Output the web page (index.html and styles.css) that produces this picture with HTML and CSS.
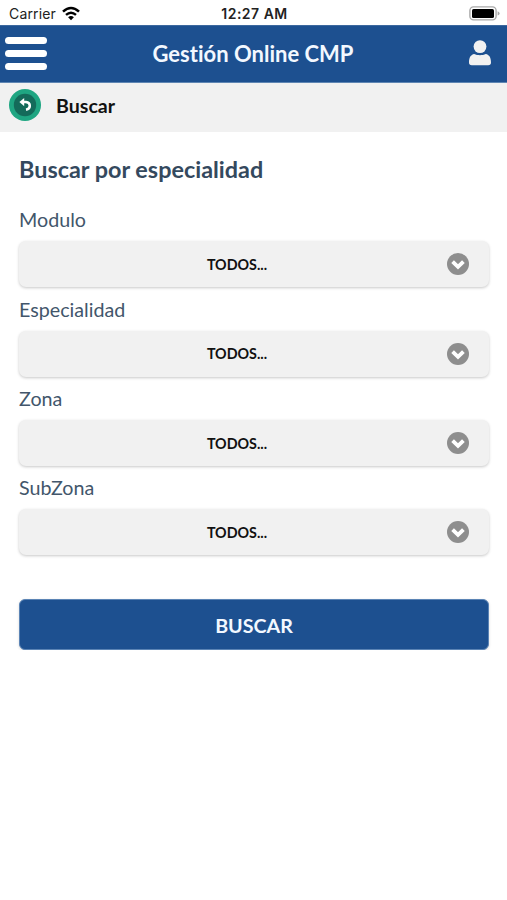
FILE: index.html
```
<!DOCTYPE html>
<html lang="es">
<head>
    <meta charset="UTF-8">
    <meta name="viewport" content="width=device-width, initial-scale=1.0">
    <title>Gestión Online CMP</title>
    <link rel="stylesheet" href="styles.css">
</head>
<body>
    <div class="status-bar">
        <div class="status-left">
            <span class="carrier">Carrier</span>
            <svg class="wifi" width="20" height="15" viewBox="0 0 20 15">
                <path d="M2 5.6 Q10 -1.6 18 5.6" fill="none" stroke="#000" stroke-width="2.6"/>
                <path d="M5 8.9 Q10 4.4 15 8.9" fill="none" stroke="#000" stroke-width="2.4"/>
                <path d="M7.1 11.2 Q10 8.6 12.9 11.2 L10 14.2 Z" fill="#000"/>
            </svg>
        </div>
        <span class="clock">12:27 AM</span>
        <svg class="battery" width="31" height="15" viewBox="0 0 31 15">
            <rect x="0.9" y="0.9" width="26.2" height="13" rx="3.6" fill="#fff" stroke="#a9a9a9" stroke-width="1.4"/>
            <rect x="3" y="3" width="22" height="9" rx="1.6" fill="#000"/>
            <path d="M28.6 5.2 Q30.6 6 30.6 7.4 T28.6 9.6 Z" fill="#a9a9a9"/>
        </svg>
    </div>

    <header class="header">
        <button type="button" class="menu-btn" aria-label="Menú">
            <span class="menu-line"></span>
            <span class="menu-line"></span>
            <span class="menu-line"></span>
        </button>
        <h1 class="header-title">Gestión Online CMP</h1>
        <button type="button" class="user-btn" aria-label="Usuario">
            <svg width="22" height="26" viewBox="0 0 22 26">
                <circle cx="11" cy="6.6" r="6.4" fill="#f1f1f1"/>
                <path d="M0 22.5 C0 17.5 1.8 14.6 5.2 14 C8.6 15.6 13.4 15.6 16.8 14 C20.2 14.6 22 17.5 22 22.5 Q22 25.3 19.2 25.3 H2.8 Q0 25.3 0 22.5 Z" fill="#f1f1f1"/>
            </svg>
        </button>
    </header>

    <div class="sub-bar">
        <svg class="back" width="34" height="34" viewBox="0 0 34 34">
            <circle cx="17" cy="17" r="16" fill="#1fa682"/>
            <circle cx="17" cy="17" r="11.2" fill="#146b5a"/>
            <path d="M14 14 H18 Q21.8 14.4 21.8 17.8 Q21.8 21 18 21.8" fill="none" stroke="#fff" stroke-width="2.5"/>
            <path d="M11.4 14 L16.2 10 V18.2 Z" fill="#fff"/>
        </svg>
        <span class="sub-title">Buscar</span>
    </div>

    <form class="search-form">
        <h2 class="form-title">Buscar por especialidad</h2>

        <div class="field">
            <div class="label">Modulo</div>
            <div class="select">
                <span class="select-text">TODOS...</span>
                <svg class="arrow" width="22" height="22" viewBox="0 0 22 22">
                    <circle cx="11" cy="11" r="11" fill="#8e8e8e"/>
                    <path d="M5.6 8.6 L11 13.9 L16.4 8.6" fill="none" stroke="#fff" stroke-width="3.8"/>
                </svg>
            </div>
        </div>

        <div class="field">
            <div class="label">Especialidad</div>
            <div class="select">
                <span class="select-text">TODOS...</span>
                <svg class="arrow" width="22" height="22" viewBox="0 0 22 22">
                    <circle cx="11" cy="11" r="11" fill="#8e8e8e"/>
                    <path d="M5.6 8.6 L11 13.9 L16.4 8.6" fill="none" stroke="#fff" stroke-width="3.8"/>
                </svg>
            </div>
        </div>

        <div class="field">
            <div class="label">Zona</div>
            <div class="select">
                <span class="select-text">TODOS...</span>
                <svg class="arrow" width="22" height="22" viewBox="0 0 22 22">
                    <circle cx="11" cy="11" r="11" fill="#8e8e8e"/>
                    <path d="M5.6 8.6 L11 13.9 L16.4 8.6" fill="none" stroke="#fff" stroke-width="3.8"/>
                </svg>
            </div>
        </div>

        <div class="field">
            <div class="label">SubZona</div>
            <div class="select">
                <span class="select-text">TODOS...</span>
                <svg class="arrow" width="22" height="22" viewBox="0 0 22 22">
                    <circle cx="11" cy="11" r="11" fill="#8e8e8e"/>
                    <path d="M5.6 8.6 L11 13.9 L16.4 8.6" fill="none" stroke="#fff" stroke-width="3.8"/>
                </svg>
            </div>
        </div>

        <button type="button" class="search-btn">BUSCAR</button>
    </form>
</body>
</html>
```
FILE: styles.css
```
* {
    box-sizing: border-box;
}
body {
    margin: 0;
    background-color: #fff;
    font-family: Lato, sans-serif;
    font-variant-ligatures: none;
}
button {
    border: none;
    padding: 0;
    background: none;
    font-family: inherit;
}

/* phone status bar */
.status-bar {
    display: grid;
    grid-template-columns: 1fr auto 1fr;
    align-items: center;
    height: 25px;
    padding: 2px 7px 0 9px;
    font-family: Inter, sans-serif;
    font-size: 14px;
    color: #222;
}
.status-left {
    display: flex;
    align-items: center;
    gap: 5px;
}
.carrier {
    letter-spacing: 0.15px;
}
.clock {
    font-weight: 600;
    letter-spacing: 0.5px;
}
.battery {
    justify-self: end;
}

/* header */
.header {
    display: flex;
    align-items: center;
    justify-content: space-between;
    height: 58px;
    padding: 0 16px 2px 5px;
    background-color: #1d5090;
    border-top: 1px solid #3c689e;
    border-bottom: 1px solid #5f86b3;
}
.menu-btn {
    display: flex;
    flex-direction: column;
    gap: 6px;
    width: 42px;
}
.menu-line {
    height: 7px;
    border-radius: 4px;
    background-color: #fff;
}
.header-title {
    margin: 0 0 0 -10px;
    font-size: 22px;
    font-weight: 700;
    color: #f3f8ff;
}
.user-btn {
    height: 26px;
}
.sub-bar {
    display: flex;
    align-items: center;
    gap: 14px;
    height: 49px;
    padding: 0 8px 5px;
    background-color: #f1f1f1;
}
.sub-title {
    font-size: 19.6px;
    font-weight: 700;
    color: #111;
}

/* form */
.search-form {
    padding: 22px 18px 0 19px;
}
.form-title {
    margin: 0 0 21.3px;
    font-size: 23.4px;
    line-height: 30px;
    font-weight: 700;
    color: #34495e;
}
.field {
    height: 89.4px;
}
.label {
    height: 36px;
    line-height: 29px;
    font-size: 19.7px;
    color: #42566b;
}
.select {
    display: flex;
    align-items: center;
    height: 46px;
    padding-right: 20px;
    border-radius: 7px;
    background-color: #f1f1f1;
    box-shadow: 0 1px 3px rgba(0, 0, 0, 0.22);
}
.select-text {
    flex: 1;
    padding-left: 8px;
    text-align: center;
    font-size: 14.3px;
    font-weight: 700;
    color: #111;
}
.search-btn {
    width: 470px;
    height: 51px;
    margin-top: 35.7px;
    padding-top: 2px;
    border: 1px solid #5b84b5;
    border-radius: 6px;
    background-color: #1d5090;
    box-shadow: 0 1px 3px rgba(0, 0, 0, 0.15);
    font-size: 19.7px;
    font-weight: 700;
    color: #f3f8ff;
}
```
